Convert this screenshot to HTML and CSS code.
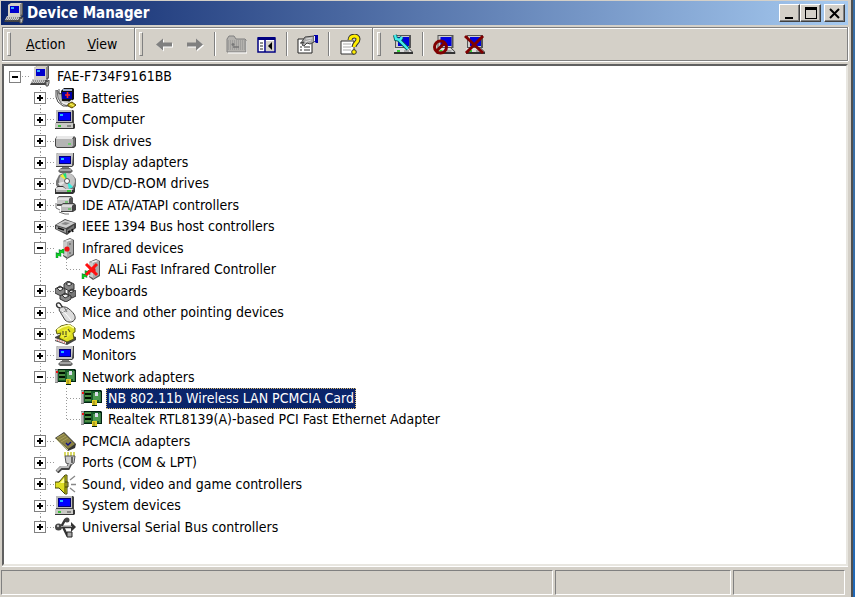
FILE: index.html
```html
<!DOCTYPE html>
<html lang="en">
<head>
<meta charset="utf-8">
<title>Device Manager</title>
<link rel="stylesheet" href="styles.css">
</head>
<body>
<svg class="sprite" aria-hidden="true">
  <symbol id="i-root" viewBox="0 0 21 21">
    <path d="M4 2 7 0h12v12l-2 2H4z" fill="#555"/><path d="M4 2 7 0h11l-2 2v11H4z" fill="#d4d0c8"/><path d="M6 3h9v7H6z" fill="#00c"/><path d="M7 4h3v2H7z" fill="#3af"/><path d="M16 2l2-2v11l-2 2z" fill="#888"/>
    <path d="M3 13h14l1 2-2 4H0z" fill="#444"/><path d="M3 13h14l-3 4H1z" fill="#ccc"/><path d="M3 15h11M2 17h12" stroke="#555" stroke-dasharray="1 1"/><path d="M15 14l2 2 2-2v3l-1 3h-2v-3z" fill="#bbb" stroke="#555"/>
  </symbol>
  <symbol id="i-battery" viewBox="0 0 21 21">
    <path d="M2 2l1 8 3 5 6 3 3-4-7-4V4L5 6z" fill="#bbb" stroke="#666"/><path d="M1 2v7l2 5 5 4h5" fill="none" stroke="#444"/><path d="M4 1v5l3-1" fill="none" stroke="#555"/><path d="M6 3l3-3h9l1 1v10l-2 2H7z" fill="#111"/><path d="M7 4h10v7H7z" fill="#00a"/><path d="M8 2h9" stroke="#9ac" stroke-width="2"/><path d="M12.500 4v6M10 7h5" stroke="#f22" stroke-width="1.600"/><path d="M7 14c4 3 9 2 10-2" stroke="#eee" stroke-width="2" fill="none"/><path d="M13 16l4-2 4 3-4 3-4-2z" fill="#cb2" stroke="#540"/><path d="M15 16l4 2" stroke="#ff6"/>
  </symbol>
  <symbol id="i-computer" viewBox="0 0 21 21">
    <path d="M1 1h17l1 1v12H1z" fill="#444"/><path d="M1 1h16v12H1z" fill="#bbb"/><path d="M3 3h13v9H3z" fill="#007"/><path d="M4 4h11v7H4z" fill="#00f"/><path d="M5 5h3v2H5z" fill="#2bf"/><path d="M0 14h18l2 1v4l-1 1H0z" fill="#333"/><path d="M0 14h18v5H0z" fill="#c9c9c5"/><path d="M3 17h3" stroke="#0b0" stroke-width="1.4"/><path d="M12 17h4" stroke="#444"/>
  </symbol>
  <symbol id="i-disk" viewBox="0 0 21 21">
    <path d="M2 5h17l2 2v8l-2 2H2l-2-2V8z" fill="#444"/><path d="M2 5h17l-2 3H1z" fill="#e8e8e8"/><path d="M1 8h17v7l-1 1H2l-1-1z" fill="#b4b4b4"/><path d="M18 8l2-2v8l-2 2z" fill="#777"/><path d="M13 13h3" stroke="#3d3"/>
  </symbol>
  <symbol id="i-display" viewBox="0 0 21 21">
    <path d="M1 2l2-1h16v12l-2 2H1z" fill="#444"/><path d="M1 2l2-1h15v2l-1 11H1z" fill="#c4c4c4"/><path d="M4 4h12v8H4z" fill="#007"/><path d="M5 5h10v6H5z" fill="#00f"/><path d="M6 6h3v2H6z" fill="#2bf"/><path d="M7 15h7v2H7z" fill="#777"/><path d="M3 19l3-3h9l3 3-2 2H5z" fill="#666"/><path d="M5 18h11" stroke="#ddd"/>
  </symbol>
  <symbol id="i-cd" viewBox="0 0 21 21">
    <path d="M4 2l4-2h6l4 2 3 4v7l-2 4H4L1 12V8z" fill="#777"/><circle cx="12" cy="8" r="8" fill="#c4c4c4"/><path d="M12 8L5 3l3-2z" fill="#ee3"/><path d="M12 8L8 1l3-1z" fill="#2d7"/><path d="M12 8l6 6-4 2z" fill="#3ed"/><path d="M12 8l-7 5-2-3z" fill="#e8e8e8"/><circle cx="12" cy="8" r="2.500" fill="#fff" stroke="#555"/><path d="M0 16l3-3h5l3 3h7l2-2v5l-2 2H0z" fill="#333"/><path d="M1 15l2-1h5l3 2h8l-2 1H1z" fill="#e0e0e0"/><path d="M1 17h16v2H1z" fill="#aaa"/><path d="M12 18h4" stroke="#1c1" stroke-width="1.500"/>
  </symbol>
  <symbol id="i-ide" viewBox="0 0 21 21">
    <path d="M2 3l2-2h12l2 2v6l-2 2H2z" fill="#555"/><path d="M2 4l2-2h12l-2 2v5H2z" fill="#c8c8c8"/><path d="M3 4h11" stroke="#fff"/><path d="M6 10l2-2h11l2 2v5l-3 2H6z" fill="#444"/><path d="M6 11l2-2h11l-2 2v5H6z" fill="#bbb"/><path d="M7 11h10" stroke="#fff"/><path d="M13 14h3M10 7h3" stroke="#3b3"/><path d="M1 8v5l4 2M4 17l6 2h4" stroke="#777" fill="none"/>
  </symbol>
  <symbol id="i-1394" viewBox="0 0 21 21">
    <path d="M0 9l10-6 11 4v5l-9 7L0 13z" fill="#444"/><path d="M1 9l9-5 10 3-9 5z" fill="#ccc"/><path d="M1 10l10 3v4L1 13z" fill="#999"/><path d="M6 8l4-2 5 1-4 2z" fill="#888"/><path d="M12 14l7-5v3l-7 5z" fill="#777"/><path d="M3 12l6 2M13 16l2-1M17 13l1 3" stroke="#111" stroke-width="1.5"/>
  </symbol>
  <symbol id="i-ir" viewBox="0 0 21 21">
    <path d="M8 3l7-3 4 2v15l-7 4-4-3z" fill="#555"/><path d="M8 3l4 1v15l-4-2z" fill="#ccc"/><path d="M12 4l6-2v14l-6 4z" fill="#aaa"/><path d="M9 3l6-2 3 1-6 2z" fill="#eee"/><path d="M14 6h2M14 15h2" stroke="#555"/><circle cx="12" cy="11" r="2.6" fill="#e11"/><path d="M2 20v-4l3 1v-4l3 1v-3" fill="none" stroke="#063" stroke-width="2.400"/><path d="M2 20v-4l3 1v-4l3 1v-3" fill="none" stroke="#1c2" stroke-width="1.600"/>
  </symbol>
  <symbol id="i-ir-off" viewBox="0 0 21 21">
    <use href="#i-ir"/><path d="M5 5l11 11M16 5L5 16" stroke="#f11" stroke-width="3"/>
  </symbol>
  <symbol id="i-keys" viewBox="0 0 21 21">
    <g stroke="#333" stroke-linejoin="round"><path d="M9 3l4-3 6 3v5l-5 2-5-3z" fill="#888"/><path d="M11 3l3-2 3 2-3 2z" fill="#eee"/><path d="M0 8l5-3 5 3v5l-4 2-6-3z" fill="#888"/><path d="M2 7l4-1 2 2-3 2z" fill="#eee"/><path d="M13 10l4-2 4 2v5l-4 2-4-3z" fill="#777"/><path d="M14 10l3-1 2 1-3 2z" fill="#ddd"/><path d="M5 15l5-3 6 3v3l-5 3-6-3z" fill="#888"/><path d="M7 14l4-1 3 2-4 2z" fill="#eee"/></g>
  </symbol>
  <symbol id="i-mouse" viewBox="0 0 21 21">
    <path d="M5 6C0 5 1 0 4 1s1 3 4 4" fill="none" stroke="#333" stroke-width="1.4"/><path d="M4 8c1-4 7-4 10-1 4 3 7 7 6 10-2 4-7 4-10 1z" fill="#ddd" stroke="#444"/><path d="M5 10c4 1 6-1 8-4M9 5l3 5" stroke="#777" fill="none"/><path d="M7 9l4 3 5 6" stroke="#fff" fill="none"/>
  </symbol>
  <symbol id="i-modem" viewBox="0 0 21 21">
    <path d="M0 13l8-4 13 4v3l-9 5-12-4z" fill="#444"/><path d="M0 14l11 4v2L0 16z" fill="#f2e6e6"/><path d="M2 16l8 3" stroke="#d33" stroke-dasharray="1 1.5"/><path d="M1 6l5-4 8-2 6 4v4l-2 1 1 6-7 3-8-4 2-5-4 1z" fill="#dd2" stroke="#551"/><path d="M2 6l5-3 7-2 5 3" stroke="#ff9" fill="none" stroke-width="1.5"/><path d="M7 7l6-3 3 6-5 5-5-2z" fill="#ee3"/><path d="M8 7v4M11 7v4M9 13l3-1M13 5l2 3" stroke="#552" stroke-width="1.2"/>
  </symbol>
  <symbol id="i-net" viewBox="0 0 21 21">
    <path d="M0 2h3v14H0z" fill="#888"/><path d="M1 3v12" stroke="#e4e4e4"/><path d="M3 2h17l1 1v12h-5v3h-5v-3H3z" fill="#021"/><path d="M3 3h16v11H3z" fill="#175c2a"/><path d="M4 5h6v2H4zM4 9h6v2H4z" fill="#010"/><path d="M4 4h6M4 8h6M4 12h6" stroke="#7fb858"/><path d="M12 5h6v7h-6z" fill="#4c9a50"/><path d="M14 4h3v4h-3z" fill="#dde"/><path d="M11 12h5v5h-5z" fill="#dc2"/><path d="M13 13v4" stroke="#872"/><path d="M1 5h2" stroke="#e11" stroke-width="2"/><path d="M19 4v10" stroke="#7c7"/>
  </symbol>
  <symbol id="i-pcmcia" viewBox="0 0 21 21">
    <path d="M0 7l9-6 12 12-1 4-7 3z" fill="#333"/><path d="M1 7l8-5 11 11-7 5z" fill="#8a8245"/><path d="M2 7l7-4M4 9l7-4M6 11l7-4" stroke="#aaa15c"/><path d="M1 8l12 11" stroke="#dd9"/><path d="M11 12l2 2 3-3" stroke="#118" fill="none" stroke-width="1.4"/>
  </symbol>
  <symbol id="i-port" viewBox="0 0 21 21">
    <path d="M9 1h12M9 3h12" stroke="#cc3" stroke-width="1.6" stroke-dasharray="2 1"/><path d="M10 4h10l-1 7-3 2-5-2z" fill="#ccc" stroke="#555"/><path d="M17 5v6" stroke="#666" stroke-width="2"/><path d="M15 12l-2 4H6l-4 4" stroke="#444" stroke-width="4" fill="none"/><path d="M15 11l-2 4H6l-4 4" stroke="#bbb" stroke-width="2" fill="none"/>
  </symbol>
  <symbol id="i-sound" viewBox="0 0 21 21">
    <path d="M0 8h4l6-7h2v19h-2l-6-6H0z" fill="#dd2" stroke="#441"/><path d="M5 9l5-6v6z" fill="#ff9"/><path d="M10 2v17M10 8h3v5h-3" stroke="#440" fill="none"/><path d="M15 6l5-4M16 10.500h5M15 14l5 4" stroke="#888" stroke-width="1.300"/>
  </symbol>
  <symbol id="i-usb" viewBox="0 0 21 21">
    <path d="M3 10h13M6 10l4-7h3M8 10l4 8h3" stroke="#333" stroke-width="2.400" fill="none"/><path d="M16 5l5 5-5 5z" fill="#333"/><circle cx="3.500" cy="10" r="3.500" fill="#444"/><circle cx="3" cy="9" r="1.200" fill="#bbb"/><circle cx="12" cy="3" r="2.500" fill="#444"/><path d="M12 15h5v5h-5z" fill="#aaa" stroke="#222"/><path d="M6 9.500h11" stroke="#999"/>
  </symbol>
  <symbol id="t-back" viewBox="0 0 21 21"><path d="M2 10.500l7-6v4h9v4H9v4z" fill="#fff" transform="translate(1 1)"/><path d="M2 10.500l7-6v4h9v4H9v4z" fill="#808080"/></symbol>
  <symbol id="t-fwd" viewBox="0 0 21 21"><path d="M19 10.500l-7-6v4H3v4h9v4z" fill="#fff" transform="translate(1 1)"/><path d="M19 10.500l-7-6v4H3v4h9v4z" fill="#808080"/></symbol>
  <symbol id="t-folder" viewBox="0 0 21 21"><path d="M1 5l2-3h5l2 3h9l1 1v12H1z" fill="#b4b2ae" stroke="#808080"/><path d="M2 7h17M2 9h17M2 11h17M2 13h17M2 15h17" stroke="#8c8c8c" stroke-dasharray="1 1"/><path d="M7 9v3M5.500 10.500h3M7 13h6" fill="none" stroke="#777" stroke-width="1.300"/><path d="M2 19h19V7" stroke="#fff" fill="none"/></symbol>
  <symbol id="t-panes" viewBox="0 0 21 21"><path d="M2 4h17v14H2z" fill="#fff" stroke="#000080" stroke-width="1.500"/><path d="M2 3h17v3H2z" fill="#000080"/><path d="M9 6v12" stroke="#000080" stroke-width="1.500"/><path d="M10 7h8v10h-8z" fill="#d4d0c8"/><path d="M4 9h3M4 12h3M4 15h3" stroke="#222"/><path d="M16 8v8l-4-4z" fill="#000"/></symbol>
  <symbol id="t-props" viewBox="0 0 24 21"><path d="M2 5h14v14H2z" fill="#fff" stroke="#222"/><path d="M4 13h2M8 13h6M4 16h2M8 16h6M4 9h3" stroke="#333"/><path d="M5 9l4-6 9-1v6l-4 2-3-1-3 3-2-1 2-3z" fill="#aaa" stroke="#444"/><path d="M10 5l6-1M9 8l6-2" stroke="#ddd"/><path d="M18 1h4v8h-2l-2-2z" fill="#00a"/><path d="M18.500 2v5" stroke="#eee"/></symbol>
  <symbol id="t-help" viewBox="0 0 21 21"><path d="M1 7h13v13H1z" fill="#fff" stroke="#333"/><path d="M3 10h8M3 13h8M3 16h8" stroke="#aaa"/><path d="M10 6c0-5 8-5 8-1 0 4-4 4-4 8" stroke="#333" stroke-width="5" fill="none"/><path d="M10 6c0-5 8-5 8-1 0 4-4 4-4 8" stroke="#fe0" stroke-width="3" fill="none"/><circle cx="14" cy="18" r="2.300" fill="#fe0" stroke="#333"/></symbol>
  <symbol id="t-pc" viewBox="0 0 21 21"><path d="M3 1h16v13H3z" fill="#555"/><path d="M4 2h13v11H4z" fill="#ccc"/><path d="M6 3h11v9H6z" fill="#00d"/><path d="M2 14h15l4 4v2H2z" fill="#333"/><path d="M2 14h14l4 4H2z" fill="#ddd"/><path d="M5 17h3" stroke="#0c0" stroke-width="1.500"/><path d="M12 17h5" stroke="#777"/></symbol>
  <symbol id="t-scan" viewBox="0 0 21 21"><use href="#t-pc"/><path d="M3 1l1 4 4 1 2-3M6 5l10 10" fill="none" stroke="#055" stroke-width="4"/><path d="M3 1l1 4 4 1 2-3M6 5l10 10" fill="none" stroke="#4ee" stroke-width="2.400"/></symbol>
  <symbol id="t-disable" viewBox="0 0 23 21"><svg x="2" width="21" height="21"><use href="#t-pc"/></svg><circle cx="8" cy="13" r="6" fill="none" stroke="#800000" stroke-width="3"/><path d="M4 17l8-8" stroke="#800000" stroke-width="3"/></symbol>
  <symbol id="t-remove" viewBox="0 0 21 21"><use href="#t-pc"/><path d="M1 2l18 17M19 2L2 19" stroke="#800000" stroke-width="3"/></symbol>
</svg>

<main class="window">
  <header class="titlebar">
    <svg class="icon"><use href="#i-root"/></svg>
    <h1>Device Manager</h1>
    <div class="caption">
      <button aria-label="Minimize"><svg viewBox="0 0 15 13"><path d="M3 10h8v2H3z"/></svg></button>
      <button aria-label="Maximize"><svg viewBox="0 0 15 13"><path d="M2 0h12v12H2zM3 3v8h10V3z" fill-rule="evenodd"/></svg></button>
      <button class="close" aria-label="Close"><svg viewBox="0 0 15 13"><path d="M3 2l9 9M12 2l-9 9" stroke="#000" stroke-width="2"/></svg></button>
    </div>
  </header>

  <div class="toolbar">
    <nav class="band menus">
      <span class="grip"></span>
      <button><u>A</u>ction</button>
      <button><u>V</u>iew</button>
    </nav>
    <div class="band">
      <span class="grip"></span>
      <button class="tool arrow" aria-label="Back"><svg><use href="#t-back"/></svg></button>
      <button class="tool arrow" aria-label="Forward"><svg><use href="#t-fwd"/></svg></button>
      <span class="sep"></span>
      <button class="tool" aria-label="Up one level"><svg><use href="#t-folder"/></svg></button>
      <button class="tool" aria-label="Show or hide console tree"><svg><use href="#t-panes"/></svg></button>
      <span class="sep"></span>
      <button class="tool" aria-label="Properties"><svg class="wide"><use href="#t-props"/></svg></button>
      <span class="sep"></span>
      <button class="tool" aria-label="Help"><svg><use href="#t-help"/></svg></button>
    </div>
    <div class="band">
      <span class="grip"></span>
      <button class="tool" aria-label="Scan for hardware changes"><svg><use href="#t-scan"/></svg></button>
      <span class="sep"></span>
      <button class="tool" aria-label="Disable"><svg class="wide"><use href="#t-disable"/></svg></button>
      <button class="tool" aria-label="Uninstall"><svg><use href="#t-remove"/></svg></button>
    </div>
  </div>

  <div class="panel">
    <ul class="tree" role="tree" aria-label="Devices">
      <li role="treeitem" aria-level="1" aria-expanded="true"><span class="node root"><button class="box minus" aria-label="Collapse"></button></span><svg class="icon"><use href="#i-root"/></svg><span class="label">FAE-F734F9161BB</span></li>
      <li role="treeitem" aria-level="2"><span class="node"><button class="box plus" aria-label="Expand"></button></span><svg class="icon"><use href="#i-battery"/></svg><span class="label">Batteries</span></li>
      <li role="treeitem" aria-level="2"><span class="node"><button class="box plus" aria-label="Expand"></button></span><svg class="icon"><use href="#i-computer"/></svg><span class="label">Computer</span></li>
      <li role="treeitem" aria-level="2"><span class="node"><button class="box plus" aria-label="Expand"></button></span><svg class="icon"><use href="#i-disk"/></svg><span class="label">Disk drives</span></li>
      <li role="treeitem" aria-level="2"><span class="node"><button class="box plus" aria-label="Expand"></button></span><svg class="icon"><use href="#i-display"/></svg><span class="label">Display adapters</span></li>
      <li role="treeitem" aria-level="2"><span class="node"><button class="box plus" aria-label="Expand"></button></span><svg class="icon"><use href="#i-cd"/></svg><span class="label">DVD/CD-ROM drives</span></li>
      <li role="treeitem" aria-level="2"><span class="node"><button class="box plus" aria-label="Expand"></button></span><svg class="icon"><use href="#i-ide"/></svg><span class="label">IDE ATA/ATAPI controllers</span></li>
      <li role="treeitem" aria-level="2"><span class="node"><button class="box plus" aria-label="Expand"></button></span><svg class="icon"><use href="#i-1394"/></svg><span class="label">IEEE 1394 Bus host controllers</span></li>
      <li role="treeitem" aria-level="2" aria-expanded="true"><span class="node"><button class="box minus" aria-label="Collapse"></button></span><svg class="icon"><use href="#i-ir"/></svg><span class="label">Infrared devices</span></li>
      <li role="treeitem" aria-level="3"><span class="guide"></span><span class="node last"></span><svg class="icon"><use href="#i-ir-off"/></svg><span class="label">ALi Fast Infrared Controller</span></li>
      <li role="treeitem" aria-level="2"><span class="node"><button class="box plus" aria-label="Expand"></button></span><svg class="icon"><use href="#i-keys"/></svg><span class="label">Keyboards</span></li>
      <li role="treeitem" aria-level="2"><span class="node"><button class="box plus" aria-label="Expand"></button></span><svg class="icon"><use href="#i-mouse"/></svg><span class="label">Mice and other pointing devices</span></li>
      <li role="treeitem" aria-level="2"><span class="node"><button class="box plus" aria-label="Expand"></button></span><svg class="icon"><use href="#i-modem"/></svg><span class="label">Modems</span></li>
      <li role="treeitem" aria-level="2"><span class="node"><button class="box plus" aria-label="Expand"></button></span><svg class="icon"><use href="#i-display"/></svg><span class="label">Monitors</span></li>
      <li role="treeitem" aria-level="2" aria-expanded="true"><span class="node"><button class="box minus" aria-label="Collapse"></button></span><svg class="icon"><use href="#i-net"/></svg><span class="label">Network adapters</span></li>
      <li role="treeitem" aria-level="3" aria-selected="true"><span class="guide"></span><span class="node"></span><svg class="icon"><use href="#i-net"/></svg><span class="label selected">NB 802.11b Wireless LAN PCMCIA Card</span></li>
      <li role="treeitem" aria-level="3"><span class="guide"></span><span class="node last"></span><svg class="icon"><use href="#i-net"/></svg><span class="label">Realtek RTL8139(A)-based PCI Fast Ethernet Adapter</span></li>
      <li role="treeitem" aria-level="2"><span class="node"><button class="box plus" aria-label="Expand"></button></span><svg class="icon"><use href="#i-pcmcia"/></svg><span class="label">PCMCIA adapters</span></li>
      <li role="treeitem" aria-level="2"><span class="node"><button class="box plus" aria-label="Expand"></button></span><svg class="icon"><use href="#i-port"/></svg><span class="label">Ports (COM &amp; LPT)</span></li>
      <li role="treeitem" aria-level="2"><span class="node"><button class="box plus" aria-label="Expand"></button></span><svg class="icon"><use href="#i-sound"/></svg><span class="label">Sound, video and game controllers</span></li>
      <li role="treeitem" aria-level="2"><span class="node"><button class="box plus" aria-label="Expand"></button></span><svg class="icon"><use href="#i-computer"/></svg><span class="label">System devices</span></li>
      <li role="treeitem" aria-level="2"><span class="node last"><button class="box plus" aria-label="Expand"></button></span><svg class="icon"><use href="#i-usb"/></svg><span class="label">Universal Serial Bus controllers</span></li>
    </ul>
  </div>

  <footer class="status"><span></span><span></span><span></span></footer>
</main>
</body>
</html>
```
FILE: styles.css
```css
* { box-sizing: border-box; }

body {
  margin: 0;
  background: linear-gradient(#3a6ea5, #3a6ea5 60%, #1f68b8);
  font: 14px/17px "DejaVu Sans Condensed", "DejaVu Sans", sans-serif;
  color: #000;
}

button {
  margin: 0;
  padding: 0;
  border: 0;
  background: none;
  font: inherit;
  color: inherit;
}

svg { display: block; }

.sprite { position: absolute; width: 0; height: 0; }

.window {
  display: flex;
  flex-direction: column;
  min-height: 100vh;
  margin-right: 2px;
  padding: 1px 3px 2px 1px;
  border-right: 2px solid #505050;
  background: #d4d0c8;
}

/* Title bar */
.titlebar {
  display: flex;
  align-items: center;
  height: 24px;
  padding: 0 3px;
  background: linear-gradient(to right, #0a246a, #a6caf0);
}

.icon { flex: none; width: 21px; height: 21px; }

.titlebar h1 {
  flex: 1;
  margin: 0 0 0 2px;
  font-size: 15px;
  font-weight: bold;
  color: #fff;
}

.caption { display: flex; }

.caption button {
  width: 21px;
  height: 18px;
  padding: 1px 2px;
  border: 1px solid;
  border-color: #fff #404040 #404040 #fff;
  box-shadow: inset -1px -1px #808080;
  background: #d4d0c8;
}

.caption .close { margin-left: 3px; }

.caption svg { width: 15px; height: 13px; }

/* Toolbar */
.toolbar {
  display: flex;
  height: 34px;
  margin: 2px 0 3px 1px;
  border: 1px solid #808080;
  box-shadow: inset 1px 1px #fff, 0 1px #fff, 1px 0 #fff;
}

.band {
  display: flex;
  align-items: center;
  padding: 0 7px 0 4px;
}

.band + .band {
  border-left: 1px solid #808080;
  box-shadow: inset 1px 0 #fff;
}

.grip {
  width: 4px;
  height: 24px;
  margin-right: 6px;
  border: 1px solid;
  border-color: #fff #808080 #808080 #fff;
}

.menus .grip { margin-right: 15px; }

.menus button + button { margin-left: 22px; }

.menus { padding-right: 17px; }

.tool {
  display: flex;
  align-items: center;
  justify-content: center;
  width: 30px;
  height: 28px;
}

.tool svg { width: 21px; height: 21px; }

.tool .wide { width: 24px; }

.sep {
  width: 2px;
  height: 24px;
  margin: 0 5px;
  border-left: 1px solid #808080;
  border-right: 1px solid #fff;
}

/* Device tree */
.panel {
  flex: 1;
  display: flex;
  margin-left: 1px;
  padding-bottom: 26px;
  border: 2px solid;
  border-color: #606060 #e8e6e0 #e8e6e0 #606060;
  box-shadow: 0 1px #fff;
  background: #fff;
}

.tree {
  flex: 1;
  display: flex;
  flex-direction: column;
  margin: 0;
  padding: 0;
  list-style: none;
}

.tree li {
  flex: 1;
  display: flex;
  align-items: center;
  min-height: 21px;
}

.tree [aria-level="2"], .tree [aria-level="3"] { padding-left: 25px; }

.guide, .node {
  flex: none;
  align-self: stretch;
  display: flex;
  align-items: center;
  width: 26px;
  padding-left: 5px;
  background-repeat: no-repeat;
  background-image:
    repeating-linear-gradient(#999 0 1px, transparent 1px 3px),
    repeating-linear-gradient(to right, #999 0 1px, transparent 1px 3px);
  background-position: 11px 0, 12px 50%;
  background-size: 1px 100%, 14px 1px;
}

.guide { background-size: 1px 100%, 0 0; }
.node.root { background-size: 0 0, 14px 1px; }
.node.last { background-size: 1px 50%, 14px 1px; }

.box {
  width: 12px;
  height: 12px;
  border: 1px solid #808080;
  background: linear-gradient(#000, #000) center / 6px 2px no-repeat #fff;
}

.box.plus {
  background:
    linear-gradient(#000, #000) center / 6px 2px no-repeat,
    linear-gradient(#000, #000) center / 2px 6px no-repeat,
    #fff;
}

.label {
  margin-left: 4px;
  padding: 2px;
  white-space: nowrap;
}

.selected {
  background: #0a246a;
  color: #fff;
  outline: 1px dotted #e0c070;
  outline-offset: -1px;
}

/* Status bar */
.status {
  display: grid;
  grid-template-columns: 1fr 176px 112px;
  gap: 2px;
  height: 25px;
  margin: 4px 3px 0 0;
}

.status span {
  border: 1px solid;
  border-color: #808080 #fff #fff #808080;
}
```
